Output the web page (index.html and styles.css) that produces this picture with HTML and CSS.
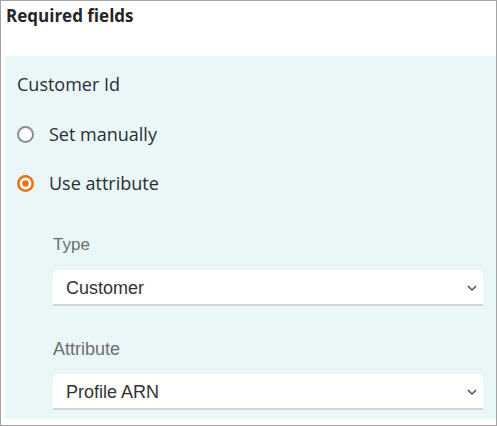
FILE: index.html
```html
<!DOCTYPE html>
<html lang="en">
<head>
    <meta charset="UTF-8">
    <meta name="viewport" content="width=device-width, initial-scale=1.0">
    <title>Required fields</title>
    <link rel="stylesheet" href="styles.css">
</head>
<body>
    <div class="frame">
        <h2 class="frame-title">Required fields</h2>

        <div class="field-panel">
            <div class="field-name">Customer Id</div>

            <label class="radio-row">
                <svg class="radio" width="17" height="17" viewBox="0 0 17 17">
                    <circle cx="8.5" cy="8.5" r="7.5" fill="#fff" stroke="#8c8c94" stroke-width="2"/>
                </svg>
                Set manually
            </label>
            <label class="radio-row second">
                <svg class="radio" width="17" height="17" viewBox="0 0 17 17">
                    <circle cx="8.5" cy="8.5" r="7.2" fill="#fff" stroke="#ec7211" stroke-width="2.6"/>
                    <circle cx="8.5" cy="8.5" r="3.2" fill="#ec7211"/>
                </svg>
                Use attribute
            </label>

            <!-- attribute options -->
            <div class="sub-fields">
                <div class="sub-label">Type</div>
                <div class="select">
                    <span>Customer</span>
                    <svg class="chevron" width="10" height="6" viewBox="0 0 10 6">
                        <polyline points="1,1 5,5 9,1" fill="none" stroke="#555" stroke-width="1.5"/>
                    </svg>
                </div>

                <div class="sub-label attr">Attribute</div>
                <div class="select">
                    <span>Profile ARN</span>
                    <svg class="chevron" width="10" height="6" viewBox="0 0 10 6">
                        <polyline points="1,1 5,5 9,1" fill="none" stroke="#555" stroke-width="1.5"/>
                    </svg>
                </div>
            </div>
        </div>
    </div>
</body>
</html>
```

FILE: styles.css
```css
/* General Reset */
* {
    margin: 0;
    padding: 0;
    box-sizing: border-box;
}

body {
    font-family: 'Open Sans', 'Liberation Sans', sans-serif;
    background: #fff;
    color: #16191f;
}

/* Outer box */
.frame {
    width: 497px;
    height: 426px;
    border: 1px solid #a3a3a3;
    padding-top: 3px;
}

.frame-title {
    font-size: 17px;
    font-weight: bold;
    line-height: 24px;
    padding-left: 5px;
    margin-bottom: 28px;
    color: #232629;
}

/* Light blue field block */
.field-panel {
    margin-left: 4px;
    background: #e9f7f8;
    padding: 16px 0 9px 12px;
}

.field-name {
    font-size: 18px;
    line-height: 24px;
    color: #2b2e33;
}

.radio-row {
    display: flex;
    align-items: center;
    gap: 15px;
    height: 24px;
    margin-top: 26px;
    font-size: 18px;
    color: #2b2e33;
}

.radio-row.second {
    margin-top: 25px;
}

.radio {
    flex-shrink: 0;
}

/* Type / Attribute selects */
.sub-fields {
    margin-top: 40px;
    padding-left: 36px;
    padding-right: 13px;
    font-family: 'Liberation Sans', Arial, sans-serif;
}

.sub-label {
    font-size: 17px;
    line-height: 20px;
    color: #6e6e6e;
    margin-bottom: 15px;
}

.sub-label.attr {
    margin-top: 33px;
    font-size: 18px;
}

.select {
    display: flex;
    align-items: flex-start;
    height: 36px;
    background: #fff;
    border-bottom: 2px solid #d3d3d3;
    border-radius: 5px 5px 0 0;
    padding: 8px 6px 0 13px;
    font-size: 18px;
    line-height: 20px;
    color: #333;
}

.chevron {
    margin-left: auto;
    margin-top: 7px;
}
```
